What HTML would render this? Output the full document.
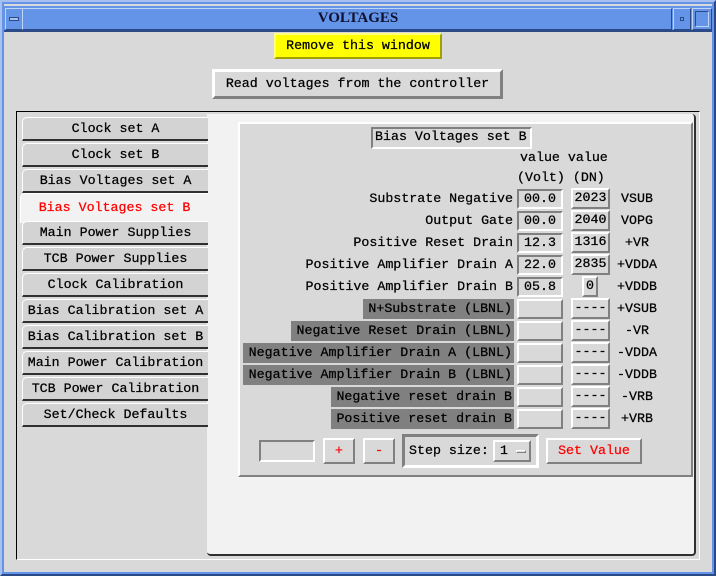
<!DOCTYPE html>
<html><head><meta charset="utf-8"><style>
*{box-sizing:border-box;margin:0;padding:0}
body{width:716px;height:576px;background:#d9d9d9;position:relative;overflow:hidden;font-family:"Liberation Mono","DejaVu Sans Mono",monospace;font-size:13.3px;color:#000;-webkit-text-stroke:0.25px #000}
.a{position:absolute}
.t{position:absolute;white-space:pre;line-height:20px}
.rs{background:#d9d9d9;border:2px solid;border-color:#fff #808080 #808080 #fff}
.sk{background:#d9d9d9;border:2px solid;border-color:#808080 #fff #fff #808080}
.tab{position:absolute;left:22px;width:186px;height:24px;background:#d3d3d3;border-left:1px solid #fff;border-top:1px solid #fff;border-bottom:2px solid #303030;border-top-left-radius:5px;text-align:center;line-height:21px;white-space:pre}
.lb{position:absolute;background:#808080;height:20px;line-height:20px;text-align:right;padding-right:2px;white-space:pre}
.vb{position:absolute;left:517px;width:46px;height:20px;line-height:16px;text-align:center}
.db{position:absolute;left:571px;width:39px;height:21px;line-height:16px;text-align:center}
.tg{position:absolute;left:613px;width:48px;text-align:center;line-height:20px}
.lbt{position:absolute;right:203px;line-height:20px;white-space:pre;text-align:right}
.red{color:#f00;-webkit-text-stroke:0.25px #f00}
</style></head><body>
<div class="a" style="left:0;top:0;width:716px;height:576px;border:4px solid #6a8fd8;border-color:#a8c0f0 #2c4a88 #2c4a88 #a8c0f0"></div>
<div class="a" style="left:2px;top:2px;width:712px;height:572px;border:2px solid #6494e8"></div>
<div class="a" style="left:4px;top:6px;width:708px;height:26px;background:#6494e8;border-bottom:2px solid #2c4a88"></div>
<div class="a" style="left:5px;top:8px;width:18px;height:22px;border:1px solid;border-color:#c0d4f8 #2c4a88 #2c4a88 #c0d4f8"></div>
<div class="a" style="left:9px;top:17px;width:10px;height:4px;border:1px solid #2c4a88;background:#a8c0f0"></div>
<div class="a" style="left:22px;top:8px;width:650px;height:22px;border:1px solid;border-color:#c0d4f8 #2c4a88 #2c4a88 #c0d4f8"></div>
<div class="a" style="left:673px;top:8px;width:18px;height:22px;border:1px solid;border-color:#c0d4f8 #2c4a88 #2c4a88 #c0d4f8"></div>
<div class="a" style="left:680px;top:17px;width:4px;height:4px;border:1px solid #2c4a88"></div>
<div class="a" style="left:692px;top:8px;width:20px;height:22px;border:1px solid;border-color:#c0d4f8 #2c4a88 #2c4a88 #c0d4f8"></div>
<div class="a" style="left:695px;top:11px;width:14px;height:16px;border:1px solid #2c4a88;border-color:#2c4a88 #c0d4f8 #c0d4f8 #2c4a88"></div>
<div class="t" style="left:0;width:716px;top:8px;text-align:center;font-family:'Liberation Serif',serif;font-weight:bold;font-size:15px;color:#101030;-webkit-text-stroke:0">VOLTAGES</div>

<div class="a" style="left:274px;top:33px;width:168px;height:26px;background:#ffff00;border:2px solid;border-color:#ffff80 #a0a000 #a0a000 #ffff80"></div>
<div class="t" style="left:274px;width:168px;top:36px;text-align:center">Remove this window</div>
<div class="a rs" style="left:212px;top:69px;width:291px;height:30px;border-width:3px"></div>
<div class="t" style="left:212px;width:291px;top:74px;text-align:center">Read voltages from the controller</div>

<div class="a" style="left:16px;top:111px;width:684px;height:449px;border:1px solid;border-color:#000 #fff #fff #000"></div>
<div class="a" style="left:207px;top:114px;width:489px;height:442px;background:#f2f2f2;border-right:2px solid #303030;border-bottom:2px solid #303030;border-radius:0 4px 4px 4px"></div>

<div class="tab" style="top:117px">Clock set A</div>
<div class="tab" style="top:143px">Clock set B</div>
<div class="tab" style="top:169px">Bias Voltages set A</div>
<div class="tab red" style="top:193px;left:20px;width:188px;height:30px;background:#f2f2f2;border-bottom:none;line-height:28px">Bias Voltages set B</div>
<div class="tab" style="top:221px">Main Power Supplies</div>
<div class="tab" style="top:247px">TCB Power Supplies</div>
<div class="tab" style="top:273px">Clock Calibration</div>
<div class="tab" style="top:299px">Bias Calibration set A</div>
<div class="tab" style="top:325px">Bias Calibration set B</div>
<div class="tab" style="top:351px">Main Power Calibration</div>
<div class="tab" style="top:377px">TCB Power Calibration</div>
<div class="tab" style="top:403px">Set/Check Defaults</div>

<div class="a" style="left:238px;top:122px;width:455px;height:355px;background:#d9d9d9;border:2px solid;border-color:#fff #808080 #808080 #fff"></div>
<div class="a" style="left:371px;top:127px;width:161px;height:22px;background:#d9d9d9;border:2px solid;border-color:#808080 #fff #fff #808080"></div>
<div class="t" style="left:375px;top:127px">Bias Voltages set B</div>
<div class="t" style="left:520px;top:148px">value value</div>
<div class="t" style="left:517px;top:168px">(Volt) (DN)</div>

<div class="lbt" style="top:189px">Substrate Negative</div>
<div class="lbt" style="top:211px">Output Gate</div>
<div class="lbt" style="top:233px">Positive Reset Drain</div>
<div class="lbt" style="top:255px">Positive Amplifier Drain A</div>
<div class="lbt" style="top:277px">Positive Amplifier Drain B</div>
<div class="lb" style="left:363px;width:151px;top:299px">N+Substrate (LBNL)</div>
<div class="lb" style="left:291px;width:223px;top:321px">Negative Reset Drain (LBNL)</div>
<div class="lb" style="left:243px;width:271px;top:343px">Negative Amplifier Drain A (LBNL)</div>
<div class="lb" style="left:243px;width:271px;top:365px">Negative Amplifier Drain B (LBNL)</div>
<div class="lb" style="left:331px;width:183px;top:387px">Negative reset drain B</div>
<div class="lb" style="left:331px;width:183px;top:409px">Positive reset drain B</div>

<div class="vb sk" style="top:189px">00.0</div>
<div class="vb sk" style="top:211px">00.0</div>
<div class="vb sk" style="top:233px">12.3</div>
<div class="vb sk" style="top:255px">22.0</div>
<div class="vb sk" style="top:277px">05.8</div>
<div class="vb rs" style="top:299px"></div>
<div class="vb rs" style="top:321px"></div>
<div class="vb rs" style="top:343px"></div>
<div class="vb rs" style="top:365px"></div>
<div class="vb rs" style="top:387px"></div>
<div class="vb rs" style="top:409px"></div>

<div class="db rs" style="top:188px">2023</div>
<div class="db rs" style="top:210px">2040</div>
<div class="db rs" style="top:232px">1316</div>
<div class="db rs" style="top:254px">2835</div>
<div class="db rs" style="top:276px;left:582px;width:16px">0</div>
<div class="db rs" style="top:298px">----</div>
<div class="db rs" style="top:320px">----</div>
<div class="db rs" style="top:342px">----</div>
<div class="db rs" style="top:364px">----</div>
<div class="db rs" style="top:386px">----</div>
<div class="db rs" style="top:408px">----</div>

<div class="tg" style="top:189px">VSUB</div>
<div class="tg" style="top:211px">VOPG</div>
<div class="tg" style="top:233px">+VR</div>
<div class="tg" style="top:255px">+VDDA</div>
<div class="tg" style="top:277px">+VDDB</div>
<div class="tg" style="top:299px">+VSUB</div>
<div class="tg" style="top:321px">-VR</div>
<div class="tg" style="top:343px">-VDDA</div>
<div class="tg" style="top:365px">-VDDB</div>
<div class="tg" style="top:387px">-VRB</div>
<div class="tg" style="top:409px">+VRB</div>

<div class="a sk" style="left:259px;top:440px;width:56px;height:22px"></div>
<div class="a rs red" style="left:323px;top:438px;width:32px;height:26px;text-align:center;line-height:22px">+</div>
<div class="a rs red" style="left:363px;top:438px;width:32px;height:26px;text-align:center;line-height:22px">-</div>
<div class="a sk" style="left:402px;top:434px;width:137px;height:34px;border-width:3px"></div>
<div class="t" style="left:409px;top:441px">Step size:</div>
<div class="a rs" style="left:493px;top:440px;width:38px;height:22px"></div>
<div class="t" style="left:500px;top:441px">1</div>
<div class="a" style="left:516px;top:450px;width:10px;height:3px;border:1px solid;border-color:#fff #808080 #808080 #fff"></div>
<div class="a rs red" style="left:546px;top:438px;width:96px;height:26px;text-align:center;line-height:22px">Set Value</div>
</body></html>
